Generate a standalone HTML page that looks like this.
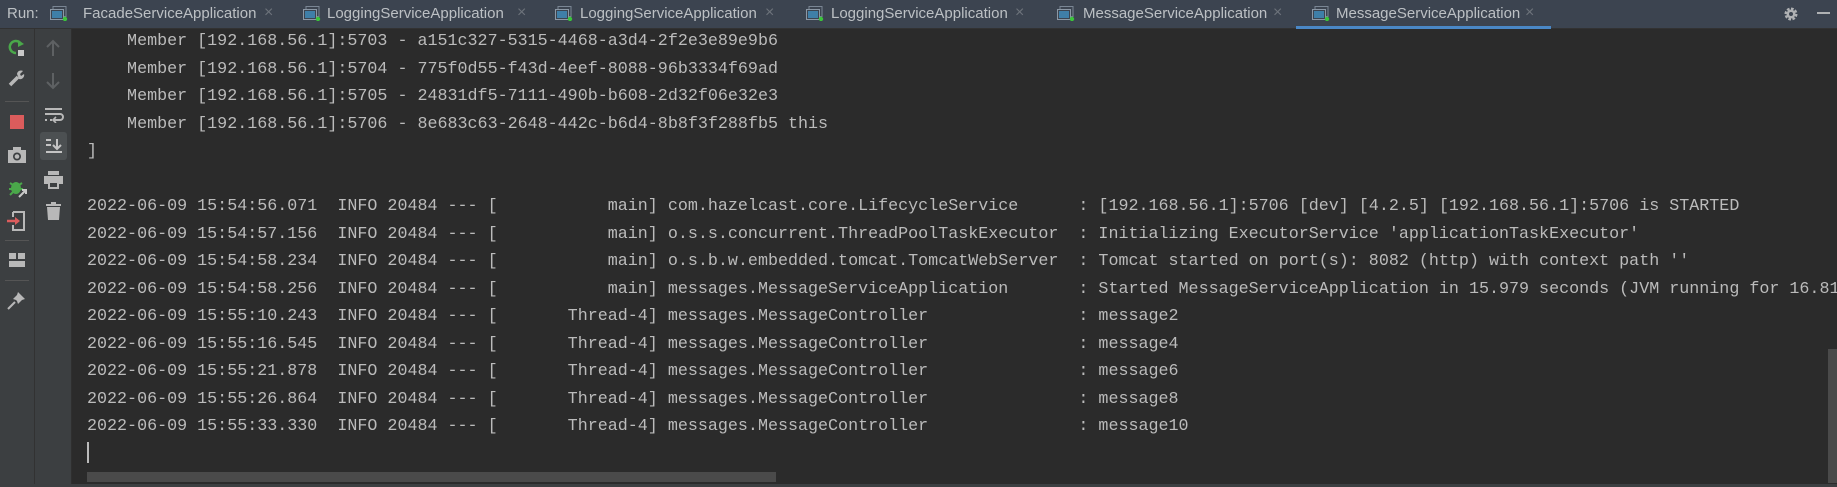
<!DOCTYPE html>
<html><head><meta charset="utf-8"><style>
*{margin:0;padding:0;box-sizing:border-box}
body{width:1837px;height:487px;background:#2b2b2b;overflow:hidden;position:relative;font-family:"Liberation Sans",sans-serif}
#tabs{position:absolute;left:0;top:0;width:1837px;height:29px;background:#3c4450;border-bottom:1px solid #323232}
.t{position:absolute;top:5px;font-size:15px;color:#bcc0c4;white-space:nowrap}
.x{position:absolute;top:4px;font-size:16px;color:#6d737b}
.ic{position:absolute;top:6px;width:18px;height:15px}
#tb1{position:absolute;left:0;top:29px;width:35px;height:455px;background:#3c3f41;border-right:1px solid #323232}
#tb2{position:absolute;left:35px;top:29px;width:37px;height:455px;background:#3c3f41;border-right:1px solid #2f2f2f}
#bot{position:absolute;left:0;top:484px;width:1837px;height:3px;background:#3c3f41}
pre{position:absolute;left:87px;top:28px;font-family:"Liberation Mono",monospace;font-size:16.7px;line-height:27.5px;color:#bbbbbb;white-space:pre}
svg{position:absolute}
</style></head><body>
<div id="tabs">
<div class="t" style="left:7px">Run:</div>
<svg class="ic" style="left:50px" viewBox="0 0 18 15"><rect x="3" y="0.5" width="13" height="10" fill="none" stroke="#7a8694"/><rect x="0.5" y="3.5" width="13" height="10" fill="#3c4450" stroke="#8c98a5"/><rect x="2" y="5" width="10" height="7" fill="#3f7fa8"/><circle cx="15" cy="13" r="2.2" fill="#3bc43b"/></svg>
<div class="t" style="left:83px">FacadeServiceApplication</div><div class="x" style="left:264px">×</div>
<svg class="ic" style="left:303px" viewBox="0 0 18 15"><rect x="3" y="0.5" width="13" height="10" fill="none" stroke="#7a8694"/><rect x="0.5" y="3.5" width="13" height="10" fill="#3c4450" stroke="#8c98a5"/><rect x="2" y="5" width="10" height="7" fill="#3f7fa8"/><circle cx="15" cy="13" r="2.2" fill="#3bc43b"/></svg>
<div class="t" style="left:327px">LoggingServiceApplication</div><div class="x" style="left:517px">×</div>
<svg class="ic" style="left:555px" viewBox="0 0 18 15"><rect x="3" y="0.5" width="13" height="10" fill="none" stroke="#7a8694"/><rect x="0.5" y="3.5" width="13" height="10" fill="#3c4450" stroke="#8c98a5"/><rect x="2" y="5" width="10" height="7" fill="#3f7fa8"/><circle cx="15" cy="13" r="2.2" fill="#3bc43b"/></svg>
<div class="t" style="left:580px">LoggingServiceApplication</div><div class="x" style="left:765px">×</div>
<svg class="ic" style="left:806px" viewBox="0 0 18 15"><rect x="3" y="0.5" width="13" height="10" fill="none" stroke="#7a8694"/><rect x="0.5" y="3.5" width="13" height="10" fill="#3c4450" stroke="#8c98a5"/><rect x="2" y="5" width="10" height="7" fill="#3f7fa8"/><circle cx="15" cy="13" r="2.2" fill="#3bc43b"/></svg>
<div class="t" style="left:831px">LoggingServiceApplication</div><div class="x" style="left:1015px">×</div>
<svg class="ic" style="left:1057px" viewBox="0 0 18 15"><rect x="3" y="0.5" width="13" height="10" fill="none" stroke="#7a8694"/><rect x="0.5" y="3.5" width="13" height="10" fill="#3c4450" stroke="#8c98a5"/><rect x="2" y="5" width="10" height="7" fill="#3f7fa8"/><circle cx="15" cy="13" r="2.2" fill="#3bc43b"/></svg>
<div class="t" style="left:1083px">MessageServiceApplication</div><div class="x" style="left:1273px">×</div>
<div style="position:absolute;left:1296px;top:26px;width:255px;height:3px;background:#4a88c7"></div>
<svg class="ic" style="left:1312px" viewBox="0 0 18 15"><rect x="3" y="0.5" width="13" height="10" fill="none" stroke="#7a8694"/><rect x="0.5" y="3.5" width="13" height="10" fill="#3c4450" stroke="#8c98a5"/><rect x="2" y="5" width="10" height="7" fill="#3f7fa8"/><circle cx="15" cy="13" r="2.2" fill="#3bc43b"/></svg>
<div class="t" style="left:1336px">MessageServiceApplication</div><div class="x" style="left:1525px">×</div>
<svg style="left:1783px;top:6px" width="16" height="16" viewBox="0 0 16 16"><circle cx="8" cy="8" r="5" fill="none" stroke="#afb1b3" stroke-width="3" stroke-dasharray="2.5 1.4"/><circle cx="8" cy="8" r="4.5" fill="#afb1b3"/><circle cx="8" cy="8" r="2" fill="#3c4450"/></svg>
<div style="position:absolute;left:1817px;top:12px;width:13px;height:2px;background:#afb1b3"></div>
</div>
<div id="tb1">
<svg style="left:8px;top:10px" width="18" height="18" viewBox="0 0 18 18"><path d="M13 5A6 6 0 1 0 8 14" fill="none" stroke="#4aa84a" stroke-width="2.5"/><path d="M10 1L16 5L10 8Z" fill="#4aa84a"/><rect x="10" y="11" width="6" height="6" fill="#c9c9c9"/></svg>
<svg style="left:8px;top:40px" width="18" height="18" viewBox="0 0 18 18"><path d="M2 16L10 8" stroke="#b8b8b8" stroke-width="3.5"/><path d="M9 5A4 4 0 0 1 15 2L12 5L13 7L16 5A4 4 0 0 1 11 10Z" fill="#b8b8b8"/></svg>
<div style="position:absolute;left:5px;top:72px;width:24px;height:1px;background:#555"></div>
<div style="position:absolute;left:10px;top:86px;width:14px;height:14px;background:#db5c5c"></div>
<svg style="left:8px;top:118px" width="18" height="16" viewBox="0 0 18 16"><rect x="0" y="3" width="18" height="13" fill="#b8b8b8"/><rect x="5" y="0" width="8" height="4" fill="#b8b8b8"/><circle cx="9" cy="9.5" r="4" fill="#3c3f41"/><circle cx="9" cy="9.5" r="2.3" fill="#b8b8b8"/></svg>
<svg style="left:8px;top:150px" width="20" height="20" viewBox="0 0 20 20"><ellipse cx="8" cy="9" rx="5" ry="6" fill="#4aa84a"/><path d="M2 4L5 6M14 4L11 6M1 10H4M12 10H15M2 16L5 13" stroke="#4aa84a" stroke-width="2"/><path d="M11 18L18 11M14 11H18V15" stroke="#c9c9c9" stroke-width="2" fill="none"/></svg>
<svg style="left:7px;top:182px" width="20" height="20" viewBox="0 0 20 20"><path d="M6 1H17V19H6V14M6 6V1" fill="none" stroke="#b8b8b8" stroke-width="2"/><path d="M0 10H11" stroke="#db5c5c" stroke-width="2.5"/><path d="M8 6L13 10L8 14Z" fill="#db5c5c"/></svg>
<div style="position:absolute;left:5px;top:211px;width:24px;height:1px;background:#555"></div>
<svg style="left:9px;top:224px" width="16" height="14" viewBox="0 0 16 14"><rect x="0" y="0" width="7" height="6" fill="#b8b8b8"/><rect x="9" y="0" width="7" height="6" fill="#b8b8b8"/><rect x="0" y="8" width="16" height="6" fill="#b8b8b8"/></svg>
<div style="position:absolute;left:5px;top:251px;width:24px;height:1px;background:#555"></div>
<svg style="left:7px;top:261px" width="20" height="20" viewBox="0 0 20 20"><path d="M1 19L8 12" stroke="#b8b8b8" stroke-width="2"/><path d="M11 2L18 9L15 10L11 14L10 11L9 10L6 9L10 5Z" fill="#b8b8b8"/></svg>
</div>
<div id="tb2">
<svg style="left:10px;top:10px" width="16" height="18" viewBox="0 0 16 18"><path d="M8 2V17M2 8L8 2L14 8" fill="none" stroke="#5e6163" stroke-width="2"/></svg>
<svg style="left:10px;top:43px" width="16" height="18" viewBox="0 0 16 18"><path d="M8 1V16M2 10L8 16L14 10" fill="none" stroke="#5e6163" stroke-width="2"/></svg>
<svg style="left:9px;top:78px" width="20" height="16" viewBox="0 0 20 16"><path d="M1 2H18M1 7H16A3 3 0 0 1 16 13H10M6 13H8M1 13H3" fill="none" stroke="#b8b8b8" stroke-width="2"/><path d="M12 10L9 13L12 16" fill="none" stroke="#b8b8b8" stroke-width="1.6"/></svg>
<div style="position:absolute;left:5px;top:103px;width:27px;height:28px;background:#4c5052;border-radius:3px"></div>
<svg style="left:10px;top:109px" width="18" height="16" viewBox="0 0 18 16"><path d="M1 2H6M1 7H6M1 14H17M12 1V11M8 7L12 11L16 7" fill="none" stroke="#c4c4c4" stroke-width="2"/></svg>
<svg style="left:9px;top:142px" width="19" height="18" viewBox="0 0 19 18"><rect x="4" y="0" width="11" height="4" fill="#b8b8b8"/><rect x="0" y="5" width="19" height="8" fill="#b8b8b8"/><rect x="4" y="10" width="11" height="8" fill="#b8b8b8"/><rect x="6" y="12" width="7" height="4" fill="#3c3f41"/></svg>
<svg style="left:11px;top:173px" width="15" height="18" viewBox="0 0 15 18"><rect x="0" y="2" width="15" height="2" fill="#b8b8b8"/><rect x="5" y="0" width="5" height="2" fill="#b8b8b8"/><path d="M1 5H14L13 18H2Z" fill="#b8b8b8"/></svg>
</div>
<pre>    Member [192.168.56.1]:5703 - a151c327-5315-4468-a3d4-2f2e3e89e9b6
    Member [192.168.56.1]:5704 - 775f0d55-f43d-4eef-8088-96b3334f69ad
    Member [192.168.56.1]:5705 - 24831df5-7111-490b-b608-2d32f06e32e3
    Member [192.168.56.1]:5706 - 8e683c63-2648-442c-b6d4-8b8f3f288fb5 this
]

2022-06-09 15:54:56.071  INFO 20484 --- [           main] com.hazelcast.core.LifecycleService      : [192.168.56.1]:5706 [dev] [4.2.5] [192.168.56.1]:5706 is STARTED
2022-06-09 15:54:57.156  INFO 20484 --- [           main] o.s.s.concurrent.ThreadPoolTaskExecutor  : Initializing ExecutorService 'applicationTaskExecutor'
2022-06-09 15:54:58.234  INFO 20484 --- [           main] o.s.b.w.embedded.tomcat.TomcatWebServer  : Tomcat started on port(s): 8082 (http) with context path ''
2022-06-09 15:54:58.256  INFO 20484 --- [           main] messages.MessageServiceApplication       : Started MessageServiceApplication in 15.979 seconds (JVM running for 16.81
2022-06-09 15:55:10.243  INFO 20484 --- [       Thread-4] messages.MessageController               : message2
2022-06-09 15:55:16.545  INFO 20484 --- [       Thread-4] messages.MessageController               : message4
2022-06-09 15:55:21.878  INFO 20484 --- [       Thread-4] messages.MessageController               : message6
2022-06-09 15:55:26.864  INFO 20484 --- [       Thread-4] messages.MessageController               : message8
2022-06-09 15:55:33.330  INFO 20484 --- [       Thread-4] messages.MessageController               : message10
</pre>
<div style="position:absolute;left:87px;top:442px;width:2px;height:21px;background:#bbbbbb"></div>
<div style="position:absolute;left:87px;top:472px;width:689px;height:10px;background:#4a4a4a"></div>
<div style="position:absolute;left:1828px;top:349px;width:9px;height:134px;background:#4a4a4a"></div>
<div id="bot"></div>
</body></html>
